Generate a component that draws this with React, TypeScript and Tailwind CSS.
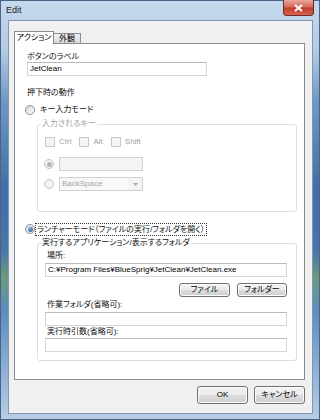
import React from 'react';

const font = "font-['Liberation_Sans','Noto_Sans_CJK_JP',sans-serif] [font-feature-settings:'palt']";

function Radio({ checked, disabled }: { checked?: boolean; disabled?: boolean }) {
  return (
    <span
      className={`flex h-[10px] w-[10px] shrink-0 items-center justify-center rounded-full border ${
        disabled ? 'border-[#c4c4c4] bg-[#f4f4f4]' : 'border-[#8a8d92] bg-[linear-gradient(135deg,#d6d8db,#fbfbfb)]'
      }`}
    >
      {checked && (
        <span className={`h-[5px] w-[5px] rounded-full ${disabled ? 'bg-[#b4b4b4]' : 'bg-[radial-gradient(circle_at_35%_35%,#7fb2e6,#1b4f8f)]'}`} />
      )}
    </span>
  );
}

function Check({ label }: { label: string }) {
  return (
    <div className="flex items-center gap-[4px]">
      <span className="h-[10px] w-[10px] border border-[#c8c8c8] bg-[#f4f4f4]" />
      <span className="text-[8px] leading-[12px] text-[#a3a3a3]">{label}</span>
    </div>
  );
}

function Field({ value, className = '' }: { value?: string; className?: string }) {
  return (
    <div
      className={`h-[14px] overflow-hidden whitespace-nowrap border border-[#d3d6db] border-t-[#b8bcc2] bg-white px-[2px] text-[8px] leading-[12px] text-black ${className}`}
    >
      {value}
    </div>
  );
}

function Btn({ children, className = '' }: { children: React.ReactNode; className?: string }) {
  return (
    <div
      className={`flex items-center justify-center whitespace-nowrap rounded-[3px] border border-[#707070] bg-[linear-gradient(to_bottom,#f3f3f3_0%,#ebebeb_50%,#dddddd_51%,#cfcfcf_100%)] text-black shadow-[inset_0_0_0_1px_#fcfcfc] ${className}`}
    >
      {children}
    </div>
  );
}

export default function App() {
  return (
    <div
      className={`flex h-[420px] w-[320px] flex-col overflow-hidden bg-[linear-gradient(to_bottom,#c6d9ee_0%,#b3cbe5_12%,#6f98c4_24%,#3f6fa5_45%,#4876ab_60%,#6c9a78_66%,#5d8dbf_74%,#9cbadb_92%,#b9cfe6_100%)] shadow-[inset_0_0_0_1px_#4a6487] ${font}`}
    >
      {/* title bar */}
      <div className="flex h-[20px] shrink-0 items-start">
        <span className="pl-[6px] pt-[4px] text-[9px] leading-[12px] text-[#1b1b1b]">Edit</span>
        <div className="ml-auto mr-[6px] flex h-[16px] w-[31px] items-center justify-center rounded-b-[4px] border border-t-0 border-[#6e2b25] bg-[linear-gradient(to_bottom,#e9a99c_0%,#d46a5b_45%,#c23d2e_55%,#d5624f_100%)]">
          <svg width="9" height="8" viewBox="0 0 9 8">
            <path d="M1 1 L8 7 M8 1 L1 7" stroke="#fff" strokeWidth="2" />
          </svg>
        </div>
      </div>

      {/* client */}
      <div className="ml-[8px] flex h-[394px] w-[305px] shrink-0 flex-col border border-[#8198b3] bg-[#f0f0f0] pl-[5px] pt-[10px]">
        {/* tabs */}
        <div className="flex h-[12px] shrink-0 items-end">
          <div className="relative z-10 -mb-px flex h-[13px] w-[40px] items-center justify-center whitespace-nowrap border border-b-0 border-[#898c95] bg-white text-[8px] leading-[12px] text-black">
            アクション
          </div>
          <div className="flex h-[10px] w-[27px] items-center justify-center whitespace-nowrap border border-b-0 border-l-0 border-[#898c95] bg-[linear-gradient(to_bottom,#f2f2f2,#d9d9d9)] text-[8px] leading-[10px] text-black">
            外観
          </div>
        </div>

        {/* panel */}
        <div className="flex h-[337px] w-[291px] shrink-0 flex-col border border-[#898c95] bg-white pl-[12px] pr-[7px] pt-[7px] text-[8px] text-[#111]">
          <div className="leading-[11px]">ボタンのラベル</div>
          <Field value="JetClean" className="w-[180px]" />

          <div className="mt-[11px] leading-[12px]">押下時の動作</div>
          <div className="ml-[-2px] mt-[5px] flex h-[12px] items-center gap-[5px]">
            <Radio />
            <span className="leading-[12px]">キー入力モード</span>
          </div>

          <fieldset className="ml-[10px] mt-[2px] rounded-[3px] border border-[#dcdfe3] pb-[20px]">
            <legend className="ml-[3px] px-[1px] leading-[12px] text-[#a3a3a3]">入力されるキー</legend>
            <div className="mt-[6px] flex h-[12px] items-center gap-[8px] pl-[7px]">
              <Check label="Ctrl" />
              <Check label="Alt" />
              <Check label="Shift" />
            </div>
            <div className="mt-[9px] flex items-center gap-[5px] pl-[6px]">
              <Radio checked disabled />
              <div className="h-[14px] w-[84px] border border-[#cdd0d4] bg-[#f4f4f4]" />
            </div>
            <div className="mt-[6px] flex items-center gap-[5px] pl-[6px]">
              <Radio disabled />
              <div className="flex h-[14px] w-[84px] items-center border border-[#cdd0d4] bg-[#f4f4f4]">
                <span className="flex-1 bg-[#f8f8f8] pl-[2px] text-[8px] leading-[12px] text-[#a3a3a3]">BackSpace</span>
                <span className="flex w-[14px] justify-center">
                  <svg width="5" height="3" viewBox="0 0 5 3">
                    <path d="M0 0 H5 L2.5 3 Z" fill="#a8a8a8" />
                  </svg>
                </span>
              </div>
            </div>
          </fieldset>

          <div className="ml-[-2px] mt-[11px] flex h-[12px] items-center gap-[1px]">
            <Radio checked />
            <span className="whitespace-nowrap px-[1px] leading-[11px] outline outline-1 outline-dotted outline-[#333]">
              ランチャーモード（ファイルの実行/フォルダを開く）
            </span>
          </div>

          <fieldset className="ml-[10px] mt-[2px] rounded-[3px] border border-[#d5dfe5] pb-[8px] pl-[7px] pr-[9px]">
            <legend className="ml-[-4px] px-[1px] leading-[12px]">実行するアプリケーション/表示するフォルダ</legend>
            <div className="ml-[2px] mt-[1px] leading-[12px]">場所:</div>
            <Field value="C:¥Program Files¥BlueSprig¥JetClean¥JetClean.exe" className="mt-[1px]" />
            <div className="mt-[6px] flex justify-end gap-[7px]">
              <Btn className="h-[14px] w-[51px] text-[8px] leading-[12px]">ファイル</Btn>
              <Btn className="h-[14px] w-[50px] text-[8px] leading-[12px]">フォルダー</Btn>
            </div>
            <div className="ml-[2px] mt-[2px] leading-[12px]">作業フォルダ(省略可):</div>
            <Field className="mt-[1px]" />
            <div className="ml-[2px] leading-[12px]">実行時引数(省略可):</div>
            <Field />
          </fieldset>
        </div>

        {/* dialog buttons */}
        <div className="mt-[6px] flex justify-end gap-[6px] pr-[7px]">
          <Btn className="h-[18px] w-[51px] text-[8px] leading-[12px]">OK</Btn>
          <Btn className="h-[18px] w-[51px] text-[8px] leading-[12px]">キャンセル</Btn>
        </div>
      </div>
    </div>
  );
}
